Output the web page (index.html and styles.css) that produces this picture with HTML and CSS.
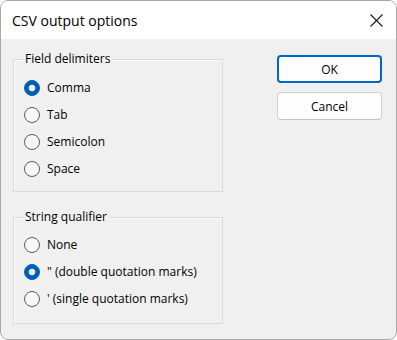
FILE: index.html
```html
<!DOCTYPE html>
<html>
<head>
    <meta charset="UTF-8">
    <title>CSV output options</title>
    <link rel="stylesheet" href="styles.css">
</head>
<body>
    <div class="window">
        <div class="titlebar">
            <span class="title">CSV output options</span>
            <svg class="close" width="13" height="13" viewBox="0 0 13 13">
                <path d="M0.5 0.5 L12.5 12.5 M12.5 0.5 L0.5 12.5" stroke="#1a1a1a" stroke-width="1.1" fill="none"/>
            </svg>
        </div>
        <div class="content">
            <div class="groups">
                <fieldset class="group delimiters">
                    <legend>Field delimiters</legend>
                    <div class="option checked"><span class="radio"></span>Comma</div>
                    <div class="option"><span class="radio"></span>Tab</div>
                    <div class="option"><span class="radio"></span>Semicolon</div>
                    <div class="option"><span class="radio"></span>Space</div>
                </fieldset>
                <fieldset class="group qualifier">
                    <legend>String qualifier</legend>
                    <div class="option"><span class="radio"></span>None</div>
                    <div class="option checked"><span class="radio"></span>&quot; (double quotation marks)</div>
                    <div class="option"><span class="radio"></span>' (single quotation marks)</div>
                </fieldset>
            </div>
            <div class="buttons">
                <button class="button default">OK</button>
                <button class="button">Cancel</button>
            </div>
        </div>
    </div>
</body>
</html>
```

FILE: styles.css
```css
* {
    margin: 0;
    padding: 0;
    box-sizing: border-box;
}

body {
    font-family: "Open Sans", "Liberation Sans", sans-serif;
    font-size: 12px;
    color: #000;
    background-color: #ffffff;
}

.window {
    width: 397px;
    height: 340px;
    border: 1px solid #a9a9a9;
    border-radius: 8px;
    overflow: hidden;
    background-color: #f0f0f0;
    display: flex;
    flex-direction: column;
}

.titlebar {
    height: 38px;
    flex: none;
    background-color: #ffffff;
    display: flex;
    align-items: center;
    justify-content: space-between;
    padding: 0 13px 0 11px;
}

.title {
    font-size: 14px;
    color: #000;
}

.content {
    display: flex;
    padding: 12px 14px 0 12px;
}

.groups {
    width: 210px;
    display: flex;
    flex-direction: column;
    gap: 17px;
}

.group {
    border: 1px solid #dadada;
    box-shadow: inset 1px 1px 0 #fbfbfb;
    padding: 7px 0 0 10px;
}

.group.delimiters {
    height: 141px;
}

.group.qualifier {
    height: 115px;
    padding-top: 6px;
}

legend {
    padding: 0 2px 0 1px;
    line-height: 16px;
}

.option {
    height: 27px;
    display: flex;
    align-items: center;
}

.radio {
    width: 16px;
    height: 16px;
    border: 1px solid #5c5c5c;
    border-radius: 50%;
    background-color: #f7f7f7;
    margin-right: 7px;
    flex: none;
}

.option.checked .radio {
    border-color: #005fb8;
    background-color: #005fb8;
    background-image: radial-gradient(circle, #ffffff 0, #ffffff 3px, transparent 3.6px);
}

.buttons {
    margin-left: auto;
    margin-top: 4px;
    display: flex;
    flex-direction: column;
    gap: 9px;
}

.button {
    width: 105px;
    height: 28px;
    font-family: inherit;
    font-size: 12px;
    color: #000;
    background-color: #fdfdfd;
    border: 1px solid #d0d0d0;
    border-bottom-color: #c2c2c2;
    border-radius: 4px;
}

.button.default {
    border: 2px solid #0067c0;
}
```
